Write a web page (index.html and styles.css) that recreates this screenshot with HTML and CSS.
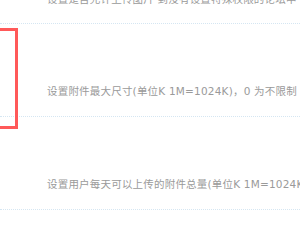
FILE: index.html
```html
<!DOCTYPE html>
<html lang="zh-CN">
<head>
<meta charset="utf-8">
<title>附件设置</title>
<link rel="stylesheet" href="styles.css">
</head>
<body>
<div class="page">
  <div class="rows">
    <div class="row row-first">
      <p class="hint">设置是否允许上传图片 到没有设置特殊权限的论坛中</p>
    </div>
    <div class="row">
      <p class="hint">设置附件最大尺寸(单位K 1M=1024K)，0 为不限制</p>
    </div>
    <div class="row">
      <p class="hint">设置用户每天可以上传的附件总量(单位K 1M=1024K)，0 为不限制</p>
    </div>
    <div class="row">
      <p class="hint">&nbsp;</p>
    </div>
  </div>
  <div class="highlight"></div>
</div>
</body>
</html>
```

FILE: styles.css
```css
html, body {
  margin: 0;
  padding: 0;
  background: #ffffff;
  overflow: hidden;
}
.page {
  position: relative;
  width: 300px;
  height: 230px;
  overflow: hidden;
  font-family: "DejaVu Sans", "Noto Sans CJK SC", sans-serif;
}
.rows {
  margin-top: -9px;
}
.row {
  padding: 59px 0 17px 47px;
  border-bottom: 1px dotted #d5e6f2;
  white-space: nowrap;
}
.row-first {
  padding-top: 0;
  padding-bottom: 16px;
}
.hint {
  margin: 0;
  font-size: 10.5px;
  line-height: 16px;
  letter-spacing: 0.2px;
  color: #9a9a9a;
}
.highlight {
  position: absolute;
  left: -20px;
  top: 28px;
  width: 32px;
  height: 95px;
  border: 3px solid #ff5959;
}
```
